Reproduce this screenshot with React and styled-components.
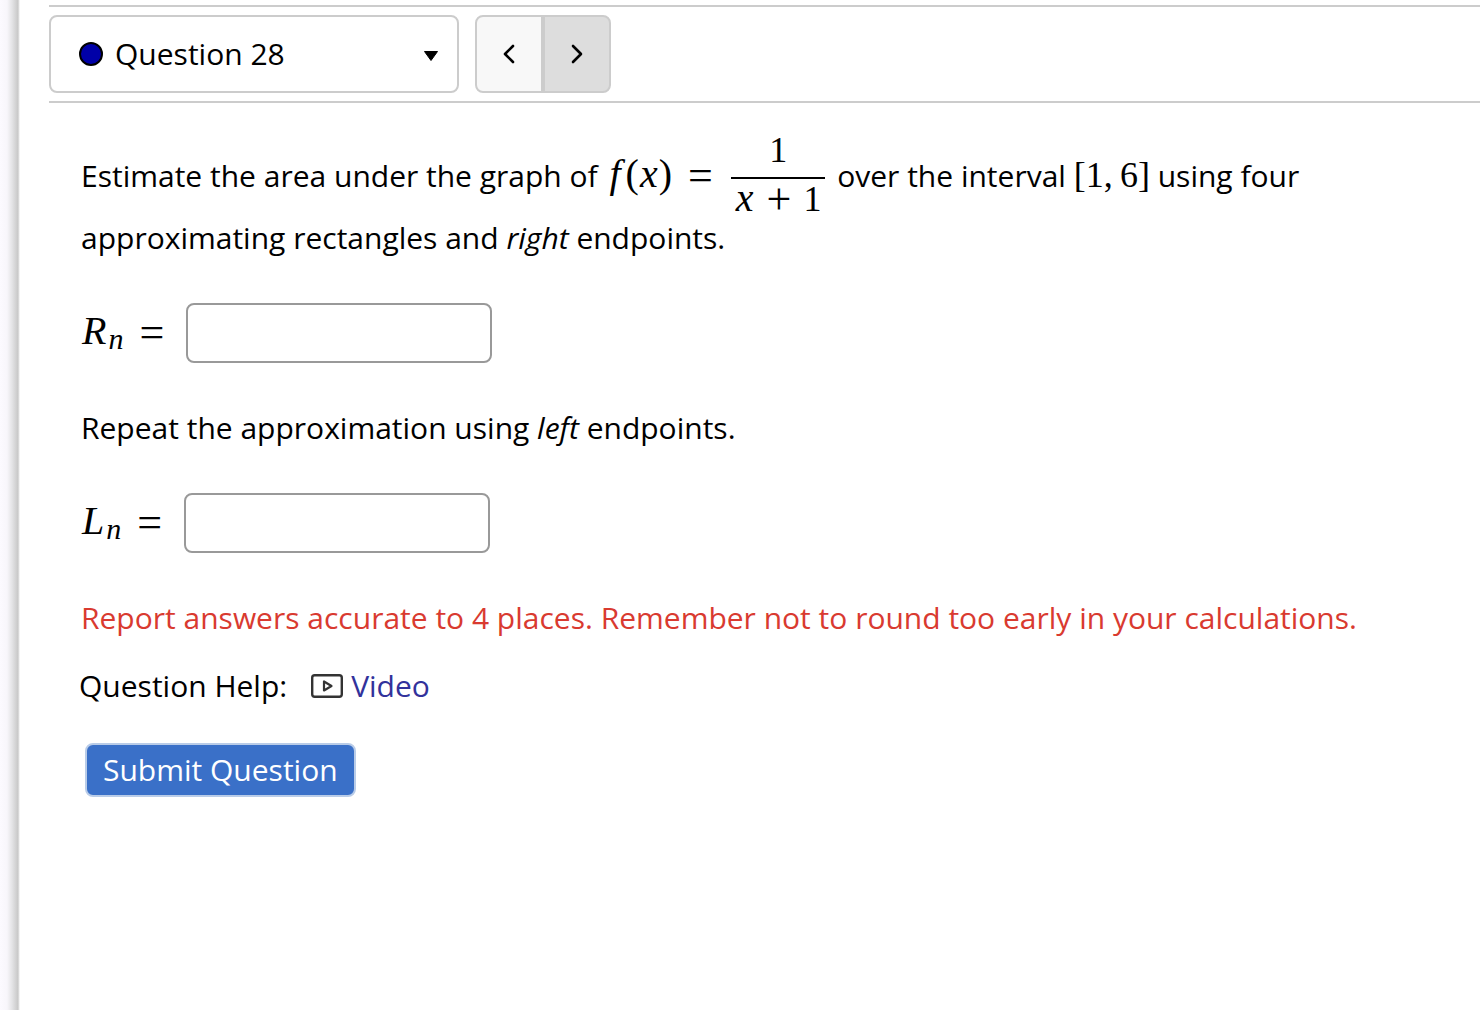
import React from 'react';
import styled, { createGlobalStyle } from 'styled-components';

const GlobalStyle = createGlobalStyle`
  * {
    box-sizing: border-box;
  }

  body {
    margin: 0;
    background: #fff;
    color: #000;
    font-family: 'Open Sans', 'Noto Sans', sans-serif;
    font-size: 30px;
    line-height: 46px;
  }
`;

const Page = styled.div`
  display: flex;
  min-height: 100vh;
`;

// Shadow strip at the edge of the page
const Gutter = styled.div`
  flex: none;
  width: 20px;
  background: linear-gradient(to right, #fcfaff 0, #f8f6fb 7px, #e4e4e6 12px, #c8c8c8 18px, #e8e8e8 19px, #fff 20px);
`;

const Main = styled.main`
  flex: 1;
  min-width: 0;
  padding: 5px 0 40px 29px;
`;

const Toolbar = styled.nav`
  display: flex;
  gap: 16px;
  padding: 8px 0;
  border-top: 2px solid #ccc;
  border-bottom: 2px solid #ccc;
`;

const QuestionPicker = styled.label`
  display: flex;
  align-items: center;
  gap: 12px;
  width: 410px;
  height: 78px;
  padding: 0 18px 0 28px;
  border: 2px solid #ccc;
  border-radius: 8px;
`;

const StatusDot = styled.span`
  flex: none;
  width: 24px;
  height: 24px;
  border: 2px solid #000;
  border-radius: 50%;
  background: #0000a8;
`;

const PickerSelect = styled.select`
  flex: 1;
  min-width: 0;
  padding: 0;
  border: none;
  appearance: none;
  background: transparent;
  color: inherit;
  font: inherit;
`;

const ButtonGroup = styled.div`
  display: flex;
`;

const NavButton = styled.button`
  display: flex;
  align-items: center;
  justify-content: center;
  width: 68px;
  height: 78px;
  padding: 0;
  border: 2px solid #ccc;
  border-radius: ${(props) => (props.$side === 'left' ? '8px 0 0 8px' : '0 8px 8px 0')};
  background: ${(props) => (props.$side === 'left' ? '#f8f8f8' : '#ddd')};
  cursor: pointer;
`;

const Problem = styled.form`
  padding: 29px 30px;
`;

const QuestionBody = styled.div`
  padding: 0 2px;
`;

const Text = styled.p`
  max-width: 1300px;
  margin: 0 0 42px;
`;

const Warning = styled(Text)`
  margin-bottom: 22px;
  color: #d93a30;
`;

const AnswerRow = styled.div`
  display: flex;
  align-items: center;
  gap: 6px;
  margin-bottom: 42px;
`;

const AnswerInput = styled.input`
  width: 306px;
  height: 60px;
  padding: 0 12px;
  border: 2px solid #999;
  border-radius: 8px;
  background: #fff;
  font: inherit;
`;

const Math = styled.span`
  display: inline-block;
  font-family: 'Liberation Serif', serif;
  font-size: 36px;
  line-height: 36px;
  white-space: nowrap;
`;

const Variable = styled.i`
  margin: 0 1px;
  font-size: 40px;
  line-height: 0;
`;

// The f leans out of its box on both sides
const FunctionName = styled(Variable)`
  margin: 0 5px 0 4px;
`;

const Paren = styled.span`
  font-size: 40px;
  line-height: 0;
`;

const Subscript = styled.sub`
  margin-left: 1px;
  font-size: 30px;
  font-style: italic;
  line-height: 0;
  vertical-align: -5px;
`;

const Relation = styled.span`
  margin: 0 16px;
  font-size: 44px;
  line-height: 0;
  vertical-align: -3px;
`;

const Operator = styled(Relation)`
  margin: 0 12px;
`;

const Fraction = styled.span`
  display: inline-flex;
  flex-direction: column;
  margin: 0 4px 0 2px;
  vertical-align: 25px;
  text-align: center;
`;

const Numerator = styled.span`
  padding-bottom: 9px;
  border-bottom: 2px solid #000;
`;

const Denominator = styled.span`
  padding: 4px 4px 0;
  line-height: 32px;
`;

const HelpRow = styled.div`
  display: flex;
  align-items: center;
  margin-bottom: 34px;
`;

const HelpLink = styled.a`
  display: flex;
  align-items: center;
  gap: 8px;
  margin-left: 24px;
  color: #32329b;
  text-decoration: none;
`;

const SubmitButton = styled.button`
  height: 54px;
  margin-left: 6px;
  padding: 0 16px;
  border: 2px solid #b9cce8;
  border-radius: 8px;
  background: #3a70c8;
  color: #fff;
  font: inherit;
  cursor: pointer;
`;

const CaretIcon = () => (
  <svg width="16" height="16" viewBox="0 0 16 16" aria-hidden="true">
    <path d="M1.500 5.500h13L8 14.500z" fill="#000" stroke="#000" strokeLinejoin="round" />
  </svg>
);

const ChevronIcon = ({ direction }) => (
  <svg width="14" height="20" viewBox="0 0 14 20" fill="none" stroke="#000" strokeWidth="2.600" strokeLinecap="round" strokeLinejoin="round" aria-hidden="true">
    <path d={direction === 'left' ? 'M11 2L3 10l8 8' : 'M3 2l8 8-8 8'} />
  </svg>
);

const VideoIcon = () => (
  <svg width="32" height="24" viewBox="0 0 32 24" fill="none" stroke="#333" strokeLinejoin="round" aria-hidden="true">
    <rect x="1.200" y="1.200" width="29.600" height="21.600" rx="2.500" strokeWidth="2.400" />
    <path d="M13 7.500v9l7.500-4.500z" strokeWidth="2.200" />
  </svg>
);

const App = () => {
  return (
    <>
      <GlobalStyle />
      <Page>
        <Gutter />
        <Main>
          <Toolbar>
            <QuestionPicker>
              <StatusDot />
              <PickerSelect aria-label="Question" defaultValue="28">
                <option value="28">Question 28</option>
              </PickerSelect>
              <CaretIcon />
            </QuestionPicker>
            <ButtonGroup>
              <NavButton type="button" $side="left" aria-label="Previous question">
                <ChevronIcon direction="left" />
              </NavButton>
              <NavButton type="button" $side="right" aria-label="Next question">
                <ChevronIcon direction="right" />
              </NavButton>
            </ButtonGroup>
          </Toolbar>

          <Problem onSubmit={(e) => e.preventDefault()}>
            <QuestionBody>
              <Text>
                Estimate the area under the graph of{' '}
                <Math>
                  <FunctionName>f</FunctionName>
                  <Paren>(</Paren>
                  <Variable>x</Variable>
                  <Paren>)</Paren>
                  <Relation>=</Relation>
                  <Fraction>
                    <Numerator>1</Numerator>
                    <Denominator>
                      <Variable>x</Variable>
                      <Operator>+</Operator>1
                    </Denominator>
                  </Fraction>
                </Math>{' '}
                over the interval <Math>[1,&thinsp;6]</Math> using four approximating rectangles and <i>right</i>{' '}
                endpoints.
              </Text>

              <AnswerRow>
                <label htmlFor="rn">
                  <Math>
                    <Variable>R</Variable>
                    <Subscript>n</Subscript>
                    <Relation>=</Relation>
                  </Math>
                </label>
                <AnswerInput id="rn" type="text" />
              </AnswerRow>

              <Text>
                Repeat the approximation using <i>left</i> endpoints.
              </Text>

              <AnswerRow>
                <label htmlFor="ln">
                  <Math>
                    <Variable>L</Variable>
                    <Subscript>n</Subscript>
                    <Relation>=</Relation>
                  </Math>
                </label>
                <AnswerInput id="ln" type="text" />
              </AnswerRow>

              <Warning>
                Report answers accurate to 4 places. Remember not to round too early in your calculations.
              </Warning>
            </QuestionBody>

            {/* Help links */}
            <HelpRow>
              Question Help:
              <HelpLink href="#video">
                <VideoIcon />
                Video
              </HelpLink>
            </HelpRow>

            <SubmitButton type="submit">Submit Question</SubmitButton>
          </Problem>
        </Main>
      </Page>
    </>
  );
};

export default App;
